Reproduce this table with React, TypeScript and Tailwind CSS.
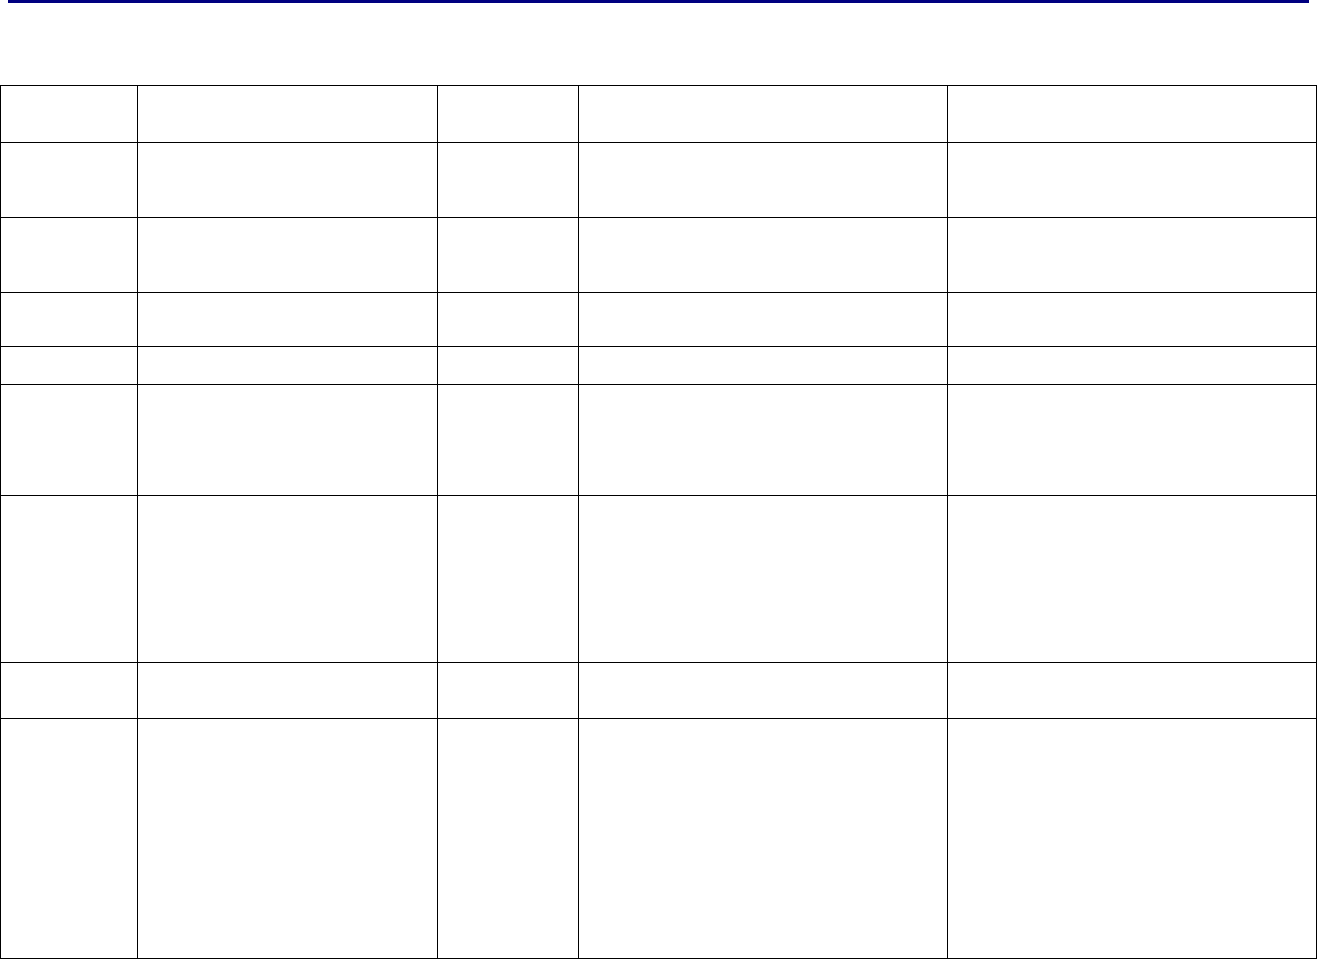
const rows = [57, 75, 75, 54, 38, 111, 167, 56, 240];
const cols = ["w-[137px]", "w-[300px]", "w-[141px]", "w-[369px]", "w-[369px]"];

export default function App() {
  return (
    <div className="w-[1317px] h-[959px] bg-white overflow-hidden">
      <div className="mx-[8px] h-[3px] bg-[#000080]" />
      <div className="h-[82px]" />
      <table className="border-collapse table-fixed w-[1316px]">
        <colgroup>
          {cols.map((c, i) => (
            <col key={i} className={c} />
          ))}
        </colgroup>
        <tbody>
          {rows.map((h, r) => (
            <tr key={r} style={{ height: h }}>
              {cols.map((_, c) => (
                <td key={c} className="border border-black p-0" />
              ))}
            </tr>
          ))}
        </tbody>
      </table>
    </div>
  );
}
